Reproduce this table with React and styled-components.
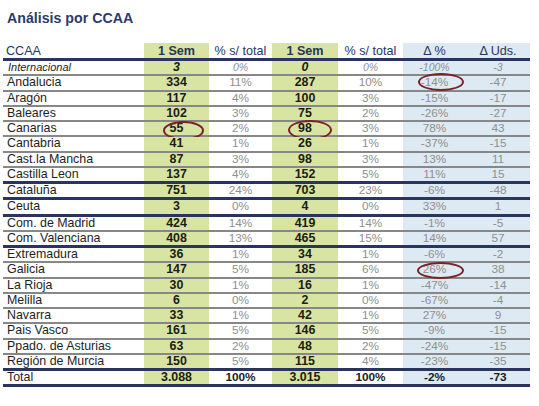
import React from "react";
import styled, { createGlobalStyle } from "styled-components";

const Global = createGlobalStyle`
  html, body { margin: 0; padding: 0; background: #ffffff; }
  body { font-family: "Liberation Sans", Arial, sans-serif; }
`;

const NAVY = "#29345f";
const GRAY_LINE = "#878787";
const GREEN = "#d8e4a1";
const BLUE = "#deeaf3";

const COLS = [141, 65, 63, 66, 65, 63, 64];

const Page = styled.div`
  width: 539px;
  height: 406px;
  padding: 10px 0 0 3px;
  box-sizing: border-box;
`;

const Title = styled.h1`
  margin: 0 0 17px 4px;
  font-size: 14.2px;
  line-height: 16px;
  font-weight: bold;
  color: #2c3a6c;
`;

const Table = styled.div`
  display: flex;
  flex-direction: column;
  width: ${COLS.reduce((a, b) => a + b, 0)}px;
`;

const HeaderRow = styled.div`
  display: flex;
  height: 15px;
  border-bottom: 3px solid ${NAVY};
`;

const Row = styled.div`
  display: flex;
  height: 13.25px;
  border-bottom: ${(p) => (p.$sep === "navy" ? `3px solid ${NAVY}` : `2px solid ${GRAY_LINE}`)};
`;

const Cell = styled.div`
  position: relative;
  flex: 0 0 ${(p) => COLS[p.$col]}px;
  box-sizing: border-box;
  background: ${(p) => (p.$bg === "green" ? GREEN : p.$bg === "blue" ? BLUE : "transparent")};
  text-align: ${(p) => (p.$col === 0 ? "left" : "center")};
  padding-left: ${(p) => (p.$col === 0 ? "3px" : "0")};
  white-space: nowrap;
`;

const HeadText = styled.span`
  display: block;
  font-size: 12.6px;
  line-height: 16px;
  color: ${NAVY};
  font-weight: ${(p) => (p.$bold ? "bold" : "normal")};
`;

const Name = styled.span`
  display: block;
  font-size: ${(p) => (p.$italic ? "11px" : "12.4px")};
  line-height: 13.25px;
  font-style: ${(p) => (p.$italic ? "italic" : "normal")};
  color: #1e1e1e;
  padding-left: ${(p) => (p.$italic ? "2px" : "1px")};
`;

const Sem = styled.span`
  display: block;
  font-size: 12.4px;
  line-height: 13.25px;
  font-weight: bold;
  font-style: ${(p) => (p.$italic ? "italic" : "normal")};
  color: #1c1c10;
`;

const Pct = styled.span`
  display: block;
  font-size: ${(p) => (p.$italic ? "10.5px" : "11.8px")};
  line-height: 13.25px;
  font-style: ${(p) => (p.$italic ? "italic" : "normal")};
  font-weight: ${(p) => (p.$strong ? "bold" : "normal")};
  color: ${(p) => (p.$strong ? "#1c1c1c" : "#8f8f8f")};
`;

const Ellipse = styled.span`
  position: absolute;
  left: ${(p) => p.$x}px;
  top: ${(p) => p.$y}px;
  width: ${(p) => p.$w}px;
  height: ${(p) => p.$h}px;
  border: 2px solid #7a2126;
  border-radius: 50%;
  box-sizing: border-box;
  pointer-events: none;
`;

const rows = [
  ["Internacional", "3", "0%", "0", "0%", "-100%", "-3", "gray", "italic"],
  ["Andalucia", "334", "11%", "287", "10%", "-14%", "-47", "gray"],
  ["Aragón", "117", "4%", "100", "3%", "-15%", "-17", "gray"],
  ["Baleares", "102", "3%", "75", "2%", "-26%", "-27", "gray"],
  ["Canarias", "55", "2%", "98", "3%", "78%", "43", "gray"],
  ["Cantabria", "41", "1%", "26", "1%", "-37%", "-15", "gray"],
  ["Cast.la Mancha", "87", "3%", "98", "3%", "13%", "11", "gray"],
  ["Castilla Leon", "137", "4%", "152", "5%", "11%", "15", "navy"],
  ["Cataluña", "751", "24%", "703", "23%", "-6%", "-48", "navy"],
  ["Ceuta", "3", "0%", "4", "0%", "33%", "1", "navy"],
  ["Com. de Madrid", "424", "14%", "419", "14%", "-1%", "-5", "gray"],
  ["Com. Valenciana", "408", "13%", "465", "15%", "14%", "57", "navy"],
  ["Extremadura", "36", "1%", "34", "1%", "-6%", "-2", "gray"],
  ["Galicia", "147", "5%", "185", "6%", "26%", "38", "gray"],
  ["La Rioja", "30", "1%", "16", "1%", "-47%", "-14", "gray"],
  ["Melilla", "6", "0%", "2", "0%", "-67%", "-4", "gray"],
  ["Navarra", "33", "1%", "42", "1%", "27%", "9", "gray"],
  ["Pais Vasco", "161", "5%", "146", "5%", "-9%", "-15", "gray"],
  ["Ppado. de Asturias", "63", "2%", "48", "2%", "-24%", "-15", "gray"],
  ["Región de Murcia", "150", "5%", "115", "4%", "-23%", "-35", "navy"],
];

// circled highlights keyed by row name and column
const marks = {
  "Andalucia-5": { x: 15, y: -3, w: 46, h: 18 },
  "Canarias-1": { x: 19, y: -1, w: 41, h: 19 },
  "Canarias-3": { x: 16, y: -2, w: 44, h: 20 },
  "Galicia-5": { x: 14, y: -1, w: 47, h: 17 },
};

function Mark({ id }) {
  const m = marks[id];
  if (!m) return null;
  return <Ellipse $x={m.x} $y={m.y} $w={m.w} $h={m.h} />;
}

export default function App() {
  return (
    <>
      <Global />
      <Page>
        <Title>Análisis por CCAA</Title>
        <Table>
          <HeaderRow>
            <Cell $col={0}><HeadText>CCAA</HeadText></Cell>
            <Cell $col={1} $bg="green"><HeadText $bold>1 Sem</HeadText></Cell>
            <Cell $col={2}><HeadText>% s/ total</HeadText></Cell>
            <Cell $col={3} $bg="green"><HeadText $bold>1 Sem</HeadText></Cell>
            <Cell $col={4}><HeadText>% s/ total</HeadText></Cell>
            <Cell $col={5} $bg="blue"><HeadText>Δ %</HeadText></Cell>
            <Cell $col={6} $bg="blue"><HeadText>Δ Uds.</HeadText></Cell>
          </HeaderRow>
          {rows.map(([name, s1, p1, s2, p2, d, u, sep, style]) => {
            const it = style === "italic";
            return (
              <Row key={name} $sep={sep}>
                <Cell $col={0}><Name $italic={it}>{name}</Name></Cell>
                <Cell $col={1} $bg="green"><Sem $italic={it}>{s1}</Sem><Mark id={`${name}-1`} /></Cell>
                <Cell $col={2}><Pct $italic={it}>{p1}</Pct></Cell>
                <Cell $col={3} $bg="green"><Sem $italic={it}>{s2}</Sem><Mark id={`${name}-3`} /></Cell>
                <Cell $col={4}><Pct $italic={it}>{p2}</Pct></Cell>
                <Cell $col={5} $bg="blue"><Pct $italic={it}>{d}</Pct><Mark id={`${name}-5`} /></Cell>
                <Cell $col={6} $bg="blue"><Pct $italic={it}>{u}</Pct></Cell>
              </Row>
            );
          })}
          <Row $sep="navy">
            <Cell $col={0}><Name>Total</Name></Cell>
            <Cell $col={1} $bg="green"><Sem>3.088</Sem></Cell>
            <Cell $col={2}><Pct $strong>100%</Pct></Cell>
            <Cell $col={3} $bg="green"><Sem>3.015</Sem></Cell>
            <Cell $col={4}><Pct $strong>100%</Pct></Cell>
            <Cell $col={5} $bg="blue"><Pct $strong>-2%</Pct></Cell>
            <Cell $col={6} $bg="blue"><Pct $strong>-73</Pct></Cell>
          </Row>
        </Table>
      </Page>
    </>
  );
}
